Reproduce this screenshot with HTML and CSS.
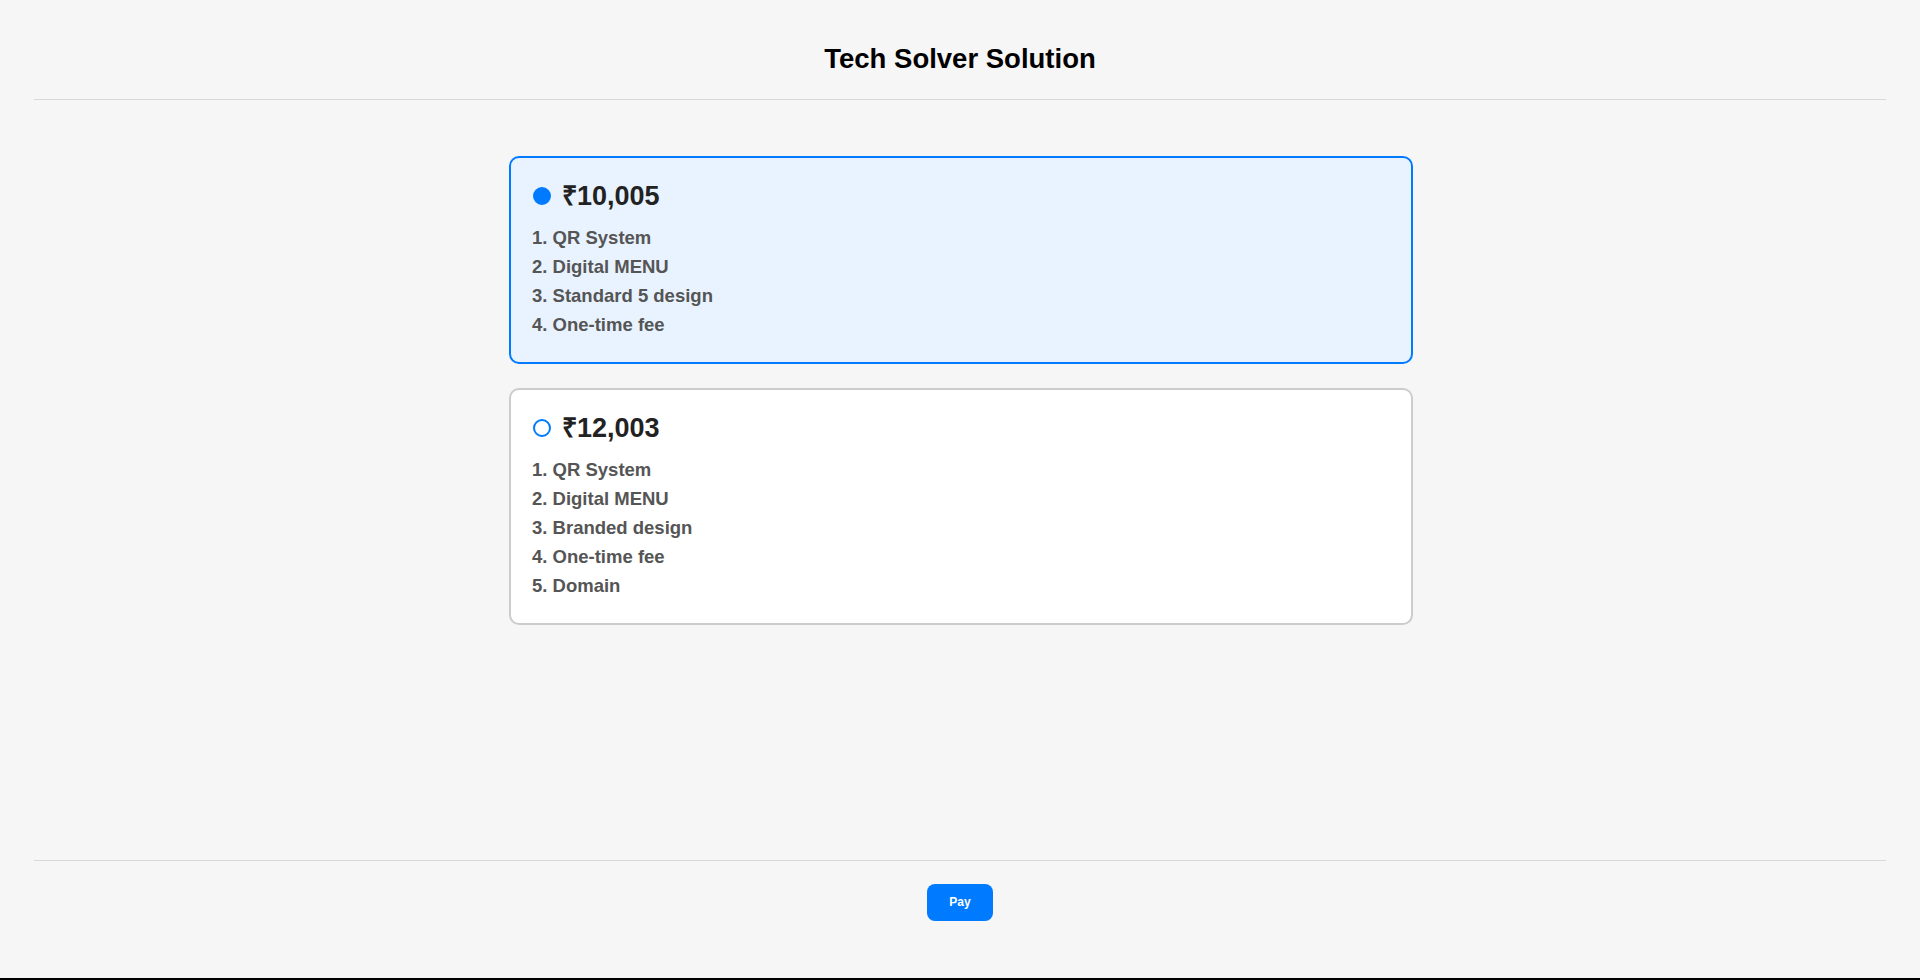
FILE: index.html
```html
<!DOCTYPE html>
<html lang="en">
<head>
<meta charset="utf-8">
<title>Tech Solver Solution</title>
<link rel="stylesheet" href="styles.css">
</head>
<body>
<div class="app">
  <header class="header">
    <h1 class="title">Tech Solver Solution</h1>
  </header>
  <main class="main">
    <div class="plan plan-selected">
      <div class="plan-head">
        <span class="radio radio-on"></span>
        <span class="price">₹10,005</span>
      </div>
      <div class="features">
        <div class="feature">1. QR System</div>
        <div class="feature">2. Digital MENU</div>
        <div class="feature">3. Standard 5 design</div>
        <div class="feature">4. One-time fee</div>
      </div>
    </div>
    <div class="plan">
      <div class="plan-head">
        <span class="radio"></span>
        <span class="price">₹12,003</span>
      </div>
      <div class="features">
        <div class="feature">1. QR System</div>
        <div class="feature">2. Digital MENU</div>
        <div class="feature">3. Branded design</div>
        <div class="feature">4. One-time fee</div>
        <div class="feature">5. Domain</div>
      </div>
    </div>
  </main>
  <footer class="footer">
    <button class="pay">Pay</button>
  </footer>
</div>
</body>
</html>
```
FILE: styles.css
```css
html {
  background: #000;
}
body {
  margin: 0;
  height: 978px;
  background: #f6f6f6;
  font-family: "Liberation Sans", Arial, sans-serif;
}
.app {
  height: 978px;
  display: flex;
  flex-direction: column;
  padding: 0 34px;
  box-sizing: border-box;
}
.header {
  padding: 43px 0 24px;
  border-bottom: 1px solid #d9d9d9;
  text-align: center;
}
.title {
  margin: 0;
  font-size: 27.5px;
  line-height: 32px;
  font-weight: 700;
  color: #000;
}
.main {
  flex: 1;
  display: flex;
  flex-direction: column;
  align-items: center;
  gap: 24px;
  padding-top: 56px;
  padding-left: 2px;
}
.plan {
  width: 904px;
  box-sizing: border-box;
  padding: 20px 20px 23px 21px;
  border: 2px solid #cccccc;
  border-radius: 10px;
  background: #ffffff;
}
.plan-selected {
  border-color: #007bff;
  background: #e8f3ff;
}
.plan-head {
  display: flex;
  align-items: center;
  height: 36px;
}
.radio {
  width: 18px;
  height: 18px;
  box-sizing: border-box;
  border: 2px solid #007bff;
  border-radius: 50%;
  margin-left: 1px;
  margin-right: 11px;
  background: #fff;
}
.radio-on {
  background: #007bff;
}
.price {
  font-size: 27px;
  font-weight: 700;
  color: #222;
  line-height: 36px;
}
.features {
  margin-top: 9px;
}
.feature {
  font-size: 18.5px;
  font-weight: 700;
  color: #555;
  line-height: 29px;
}
.footer {
  border-top: 1px solid #d9d9d9;
  padding: 23px 0 57px;
  display: flex;
  justify-content: center;
}
.pay {
  height: 37px;
  padding: 0 22px;
  border: none;
  border-radius: 8px;
  background: #007bff;
  color: #fff;
  font-family: "Liberation Sans", Arial, sans-serif;
  font-size: 12px;
  font-weight: 700;
  line-height: 37px;
  cursor: pointer;
}
```
